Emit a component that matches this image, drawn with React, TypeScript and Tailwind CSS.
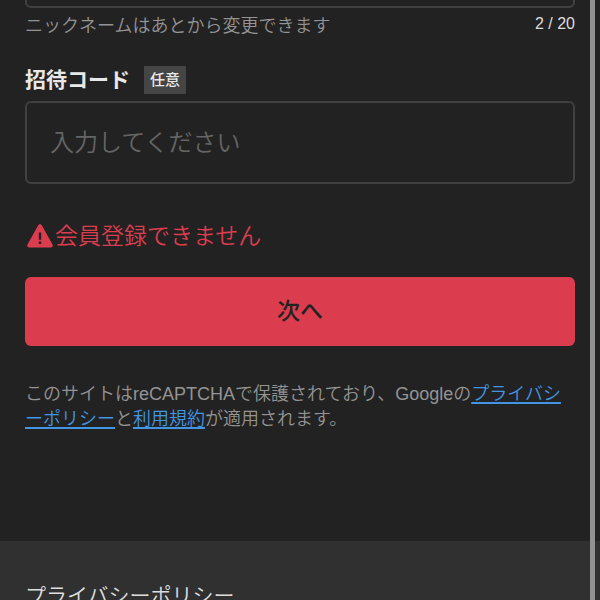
import { useState } from "react";

function WarningIcon() {
  return (
    <svg viewBox="0 0 26 24" className="h-6 w-[26px] shrink-0" aria-hidden="true">
      <path
        d="M11.2 1.2a2.1 2.1 0 0 1 3.6 0l10.7 19.4a1.9 1.9 0 0 1-1.7 2.9H2.2a1.9 1.9 0 0 1-1.7-2.9z"
        fill="#dc3d4e"
      />
      <path d="M11.8 8.5h2.4v7.3h-2.4zM11.8 17.6h2.4V20h-2.4z" fill="#222222" />
    </svg>
  );
}

export default function App() {
  const [nickname, setNickname] = useState("");
  const [code, setCode] = useState("");

  return (
    <div
      lang="ja"
      className="relative flex h-screen flex-col overflow-hidden bg-[#222222] font-['Liberation_Sans','Noto_Sans_CJK_JP',sans-serif] font-[350] text-[#949494]"
    >
      <main className="shrink-0 px-[25px] pb-[109px]">
        {/* NICKNAME */}

        <input
          type="text"
          aria-label="ニックネーム"
          value={nickname}
          onChange={(e) => setNickname(e.target.value)}
          className="block h-2 w-full rounded-b-md border-2 border-t-0 border-[#404040] bg-transparent px-6 outline-none"
        />

        <div className="flex items-start justify-between pt-1">
          <p className="text-[18px] leading-7">ニックネームはあとから変更できます</p>
          <p className="text-[16px] leading-6 text-[#dddddd]">2 / 20</p>
        </div>

        {/* INVITE CODE */}

        <div className="mt-[26px] flex items-center gap-[14px]">
          <label htmlFor="code" className="text-[21px] leading-7 font-bold text-[#e8e8e8]">
            招待コード
          </label>
          <span className="bg-[#454545] px-[6px] text-[15px] leading-7 font-medium text-[#e8e8e8]">
            任意
          </span>
        </div>

        <input
          id="code"
          type="text"
          value={code}
          onChange={(e) => setCode(e.target.value)}
          placeholder="入力してください"
          className="mt-[7px] block h-[83px] w-full rounded-md border-2 border-[#404040] bg-transparent px-[23px] text-[24px] text-[#e8e8e8] outline-none placeholder:text-[#656565]"
        />

        {/* ERROR */}

        <p role="alert" className="mt-[38px] flex items-center gap-[2px] pl-[2px] text-[23px] leading-7 text-[#dc3d4e]">
          <WarningIcon />
          会員登録できません
        </p>

        <button
          type="button"
          className="mt-[27px] block h-[69px] w-full rounded-md bg-[#dc3d4e] text-[23px] font-medium text-[#222222]"
        >
          次へ
        </button>

        <p className="mt-9 text-[18px] leading-[25px] break-all">
          このサイトはreCAPTCHAで保護されており、Googleの
          <a href="#privacy" className="text-[#4295e2] underline decoration-2 underline-offset-2">
            プライバシーポリシー
          </a>
          と
          <a href="#terms" className="text-[#4295e2] underline decoration-2 underline-offset-2">
            利用規約
          </a>
          が適用されます。
        </p>
      </main>

      {/* FOOTER */}

      <footer className="shrink-0 bg-[#303030] px-[25px] py-[39px]">
        <a href="#privacy" className="block text-[21px] leading-8 text-[#dddddd]">
          プライバシーポリシー
        </a>
      </footer>

      {/* scroll thumb over the page edge */}
      <div className="absolute inset-y-0 right-[5px] w-[5px] bg-[#919191]" />
    </div>
  );
}
